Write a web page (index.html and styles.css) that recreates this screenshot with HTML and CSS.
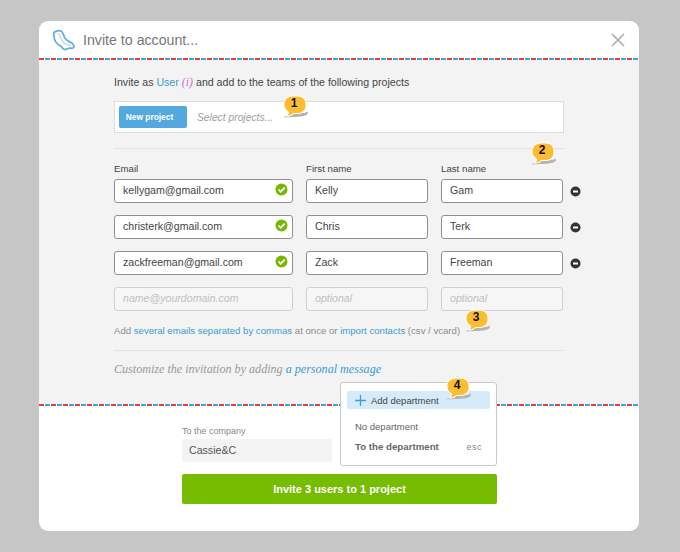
FILE: index.html
```html
<!DOCTYPE html>
<html lang="en">
<head>
<meta charset="utf-8">
<title>Invite to account</title>
<link rel="stylesheet" href="styles.css">
</head>
<body>
<div class="modal">
  <header class="head">
    <svg class="logo" width="26" height="26" viewBox="0 0 26 26"><path d="M1.500 5C3 3.800 6.500 3.200 8.500 4.200c1.500 1 2 4.300 3.500 7 1.800 2.800 6.200 3.700 8 6 1 1.300 1.200 2.800.3 3.500-1.800 1-3.800.2-5.500.8-1.200.5-2.300 1.500-3.800.8-1.500-.8-2-2.300-3.500-3.300-1.800-1.200-4-2.300-5-4.500C1 12.300 1.400 10.500.9 8.800.6 7.300.6 5.800 1.500 5Z" fill="#fff" stroke="#66b1dc" stroke-width="1.800"/><path d="M4 6.500c1.500 0 2.500.5 3 2.500.8 3 2 5.500 4.500 7.500 1.500 1.200 4.500 1.500 6.500 2" fill="none" stroke="#b3dbf0" stroke-width="1.200"/></svg>
    <h1 class="title">Invite to account...</h1>
    <svg class="close" width="14" height="14" viewBox="0 0 14 14"><path d="M1 1l12 12M13 1L1 13" stroke="#a8a8a8" stroke-width="1.500" fill="none"/></svg>
  </header>
  <div class="airmail"></div>
  <main class="body">
    <p class="intro">Invite as <a class="link" href="#">User</a> <i class="info">(i)</i> and add to the teams of the following projects</p>
    <div class="projects">
      <button class="new-project" type="button">New project</button>
      <span class="select-hint">Select projects...</span>
      <span class="badge badge-1"><svg class="badge-art" width="28" height="26" viewBox="0 0 28 26"><use href="#bubble"/></svg><b>1</b></span>
    </div>
    <hr class="rule rule-a">
    <div class="labels">
      <span class="label">Email</span>
      <span class="label">First name</span>
      <span class="label">Last name<span class="badge badge-2"><svg class="badge-art" width="28" height="26" viewBox="0 0 28 26"><use href="#bubble"/></svg><b>2</b></span></span>
    </div>
    <div class="grid">
      <div class="field">kellygam@gmail.com<svg class="check" width="13" height="13" viewBox="0 0 13 13"><use href="#check"/></svg></div><div class="field">Kelly</div><div class="field">Gam</div><svg class="minus" width="11" height="11" viewBox="0 0 11 11"><use href="#minus"/></svg>

      <div class="field">christerk@gmail.com<svg class="check" width="13" height="13" viewBox="0 0 13 13"><use href="#check"/></svg></div><div class="field">Chris</div><div class="field">Terk</div><svg class="minus" width="11" height="11" viewBox="0 0 11 11"><use href="#minus"/></svg>

      <div class="field">zackfreeman@gmail.com<svg class="check" width="13" height="13" viewBox="0 0 13 13"><use href="#check"/></svg></div><div class="field">Zack</div><div class="field">Freeman</div><svg class="minus" width="11" height="11" viewBox="0 0 11 11"><use href="#minus"/></svg>

      <div class="field field-empty">name@yourdomain.com</div><div class="field field-empty">optional</div><div class="field field-empty">optional</div><span></span>
    </div>
    <p class="help">Add <a class="link" href="#">several emails separated by commas</a> at once or <a class="link" href="#">import contacts</a> (csv / vcard)<span class="badge badge-3"><svg class="badge-art" width="28" height="26" viewBox="0 0 28 26"><use href="#bubble"/></svg><b>3</b></span></p>
    <hr class="rule rule-b">
    <p class="custom">Customize the invitation by adding <a class="link" href="#">a personal message</a></p>
  </main>
  <div class="airmail"></div>
  <footer class="foot">
    <div class="company">
      <span class="company-label">To the company</span>
      <div class="company-value">Cassie&amp;C</div>
    </div>
    <button class="invite" type="button">Invite 3 users to 1 project</button>
    <div class="menu">
      <div class="menu-add"><svg width="13" height="13" viewBox="0 0 13 13"><path d="M6.500 1v11M1 6.500h11" stroke="#3e9fd6" stroke-width="1.300" fill="none"/></svg>Add department</div>
      <div class="menu-none">No department</div>
      <div class="menu-row"><b>To the department</b><span class="esc">esc</span></div>
      <span class="badge badge-4"><svg class="badge-art" width="28" height="26" viewBox="0 0 28 26"><use href="#bubble"/></svg><b>4</b></span>
    </div>
  </footer>
</div>
<svg class="defs" width="0" height="0">
  <defs>
    <g id="bubble">
      <path d="M0 24.500c6-3 13-4.500 18-4.500 3 0 5-.5 6.500-1.500 1 1 .5 3-2 4-5 1.500-14.500 1.500-22.500 2Z" fill="#b4b4b4"/>
      <path d="M10 3.500h5c4.300 0 7.500 3 7.500 7v2.500c0 4-3.200 7-7.500 7h-4.500c-1.500 1.300-3.500 2.300-6 2.700 1-1 1.500-2.200 1.500-3.700C3.500 17 1.500 15 1.500 12.500v-2c0-4 3.800-7 8.500-7Z" fill="#fdbd33" stroke="#fff" stroke-width="2" stroke-linejoin="round" paint-order="stroke"/>
    </g>
    <g id="check">
      <circle cx="6.500" cy="6.500" r="6" fill="#77b800"/>
      <path d="M3.500 6.500l2.200 2.200 4-4" fill="none" stroke="#fff" stroke-width="1.700"/>
    </g>
    <g id="minus">
      <circle cx="5.500" cy="5.500" r="5" fill="#333"/>
      <rect x="3" y="4.500" width="5" height="2" fill="#fff"/>
    </g>
  </defs>
</svg>
</body>
</html>
```
FILE: styles.css
```css
* { box-sizing: border-box; }
html, body { margin: 0; height: 100%; }
body {
  background: #c6c6c6;
  font-family: "Liberation Sans", Arial, sans-serif;
  padding: 21px 41px 21px 39px;
  color: #444;
}
.modal {
  width: 600px;
  height: 510px;
  background: #fff;
  border-radius: 9px;
  overflow: hidden;
  display: flex;
  flex-direction: column;
}
.head {
  height: 37px;
  display: flex;
  align-items: center;
  padding: 0 14px;
  flex: none;
}
.logo { flex: none; margin-top: 1px; }
.title {
  margin: 0 0 0 4px;
  font-size: 14.200px;
  font-weight: 400;
  color: #777;
  flex: 1;
}
.close { flex: none; }
.airmail {
  flex: none;
  height: 2px;
  background: repeating-linear-gradient(90deg, #dd3f43 0 5px, #fff 5px 6px, #3ea6da 6px 11px, #fff 11px 12px);
}
.body {
  flex: none;
  height: 344px;
  background: #f3f3f3;
  padding: 15px 75px 0;
}
.intro { margin: 0; font-size: 10.600px; line-height: 14px; color: #444; }
.link { color: #3a9dd3; text-decoration: none; }
.info { font-family: "Liberation Serif", serif; color: #cf6fd0; font-size: 12px; }
.projects {
  position: relative;
  margin-top: 12px;
  width: 450px;
  height: 32px;
  background: #fff;
  border: 1px solid #dcdcdc;
  display: flex;
  align-items: center;
  padding-left: 4px;
}
.new-project {
  width: 68px;
  height: 22px;
  border: 0;
  border-radius: 2px;
  padding: 0 7px 0 0;
  background: #53a9df;
  color: #fff;
  font: bold 8.400px "Liberation Sans", Arial, sans-serif;
}
.select-hint {
  margin-left: 10px;
  font-size: 10.300px;
  font-style: italic;
  color: #a0a0a0;
}
.rule { border: 0; height: 1px; background: #e2e2e2; width: 450px; }
.rule-a { margin: 15px 0 0; }
.labels {
  margin-top: 14px;
  height: 16px;
  display: grid;
  grid-template-columns: 179px 122px 122px;
  column-gap: 13px;
}
.label { font-size: 9.700px; line-height: 12px; color: #444; position: relative; }
.grid {
  display: grid;
  grid-template-columns: 179px 122px 122px 11px;
  column-gap: 13px;
  grid-auto-rows: 24px;
  row-gap: 12px;
  align-items: center;
}
.field {
  height: 24px;
  border: 1px solid #8f8f8f;
  border-radius: 3px;
  background: #fff;
  padding: 0 8px;
  font-size: 10.600px;
  line-height: 21px;
  color: #444;
  position: relative;
}
.field-empty {
  border-color: #d0d0d0;
  background: #f6f6f6;
  color: #c0c0c0;
  font-style: italic;
}
.check { position: absolute; right: 4px; top: 3px; }
.minus { margin-left: -6px; }
.help { margin: 14px 0 0; font-size: 9.600px; line-height: 12px; color: #8c8c8c; position: relative; }
.rule-b { margin: 13px 0 0; }
.custom {
  margin: 11px 0 0;
  font-family: "Liberation Serif", serif;
  font-style: italic;
  font-size: 12.100px;
  line-height: 14px;
  color: #999;
}
.foot {
  flex: 1;
  position: relative;
  padding: 19px 142px 0 143px;
}
.company { width: 150px; height: 49px; }
.company-label { display: block; font-size: 9px; line-height: 12px; color: #888; }
.company-value {
  margin-top: 2px;
  height: 23px;
  background: #f3f3f3;
  border-radius: 2px;
  padding: 0 7px;
  font-size: 10.600px;
  line-height: 23px;
  color: #555;
}
.invite {
  display: block;
  width: 315px;
  height: 30px;
  border: 0;
  border-radius: 2px;
  background: #76bc00;
  color: #fff;
  font: bold 11px "Liberation Sans", Arial, sans-serif;
}
.menu {
  position: absolute;
  left: 301px;
  top: -24px;
  width: 157px;
  height: 84px;
  background: #fff;
  border: 1px solid #c8c8c8;
  border-radius: 3px;
  padding: 8px 6px 0;
  font-size: 9.500px;
}
.menu-add {
  height: 18px;
  background: #d5ebfa;
  border-radius: 2px;
  display: flex;
  align-items: center;
  gap: 4px;
  padding-left: 7px;
  color: #444;
}
.menu-none { margin: 12px 0 0 8px; line-height: 12px; color: #666; }
.menu-row { margin: 8px 8px 0; display: flex; justify-content: space-between; line-height: 12px; font-size: 9.700px; color: #666; }
.esc { font-size: 9px; letter-spacing: .5px; color: #888; }
.badge { position: absolute; width: 28px; height: 26px; font-size: 12px; color: #111; }
.badge b { position: absolute; left: 0; width: 22px; top: 3px; text-align: center; line-height: 14px; }
.badge-art { display: block; }
.badge-1 { left: 168px; top: -9px; }
.badge-2 { left: 90px; top: -23px; }
.badge-3 { left: 351px; top: -18px; }
.badge-4 { left: 105px; top: -8px; }
.defs { position: absolute; }
```
